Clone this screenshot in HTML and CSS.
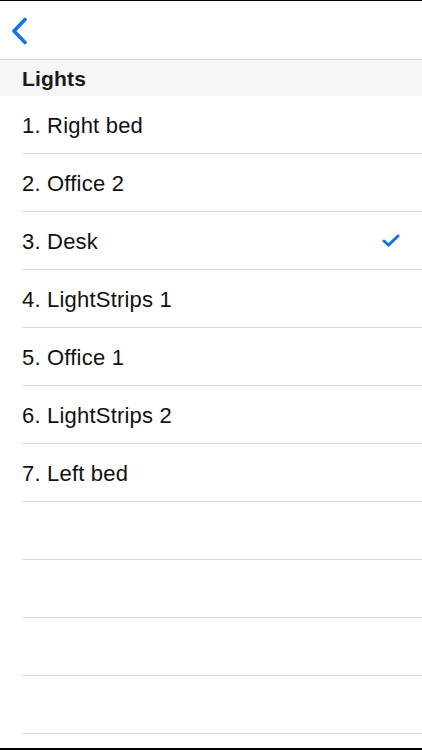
FILE: index.html
```html
<!DOCTYPE html>
<html lang="en">
<head>
    <meta charset="UTF-8">
    <meta name="viewport" content="width=device-width, initial-scale=1.0">
    <title>Lights</title>
    <link rel="stylesheet" href="styles.css">
</head>
<body>
    <div class="screen">
        <!-- Navigation bar -->
        <header class="nav-bar">
            <button class="back-button" type="button" aria-label="Back">
                <svg width="18" height="28" viewBox="0 0 18 28">
                    <path d="M15 2.5 L4 14 L15 25.5" fill="none" stroke="#1670f0" stroke-width="3.6" stroke-linecap="round" stroke-linejoin="round"/>
                </svg>
            </button>
        </header>

        <!-- Section -->
        <div class="section-header">Lights</div>
        <ul class="light-list">
            <li class="row">1. Right bed</li>
            <li class="row">2. Office 2</li>
            <li class="row selected">3. Desk
                <svg class="check" width="18" height="14" viewBox="0 0 18 14">
                    <path d="M2 7 L6.5 11.2 L16 2" fill="none" stroke="#1670f0" stroke-width="3" stroke-linecap="round" stroke-linejoin="round"/>
                </svg>
            </li>
            <li class="row">4. LightStrips 1</li>
            <li class="row">5. Office 1</li>
            <li class="row">6. LightStrips 2</li>
            <li class="row">7. Left bed</li>
            <li class="row"></li>
            <li class="row"></li>
            <li class="row"></li>
            <li class="row"></li>
        </ul>
    </div>
</body>
</html>
```

FILE: styles.css
```css
/* Common Styles */
* {
    margin: 0;
    padding: 0;
    box-sizing: border-box;
}

body {
    width: 422px;
    height: 750px;
    background-color: #fff;
    font-family: "Liberation Sans", Arial, sans-serif;
    color: #111;
    overflow: hidden;
}

.screen {
    display: flex;
    flex-direction: column;
    height: 750px;
    border-top: 1px solid #000;
    border-bottom: 2px solid #000;
}

.nav-bar {
    display: flex;
    align-items: center;
    height: 59px;
    border-bottom: 1px solid #d6d6d6;
    padding-left: 10px;
}

.back-button {
    display: flex;
    border: none;
    background: none;
    cursor: pointer;
    margin-top: 2px;
}

.section-header {
    display: flex;
    align-items: center;
    height: 36px;
    padding-left: 22px;
    padding-top: 2px;
    background-color: #f6f6f6;
    font-size: 21px;
    font-weight: bold;
    letter-spacing: 0.2px;
    color: #1a1a1a;
}

.light-list {
    list-style: none;
    flex: 1;
    overflow: hidden;
}

.row {
    display: flex;
    align-items: center;
    justify-content: space-between;
    height: 58px;
    margin-left: 22px;
    padding-right: 22px;
    padding-top: 2px;
    border-bottom: 1px solid #dedede;
    font-size: 22px;
    letter-spacing: 0.2px;
}

.row .check {
    margin-top: -1px;
}
```
